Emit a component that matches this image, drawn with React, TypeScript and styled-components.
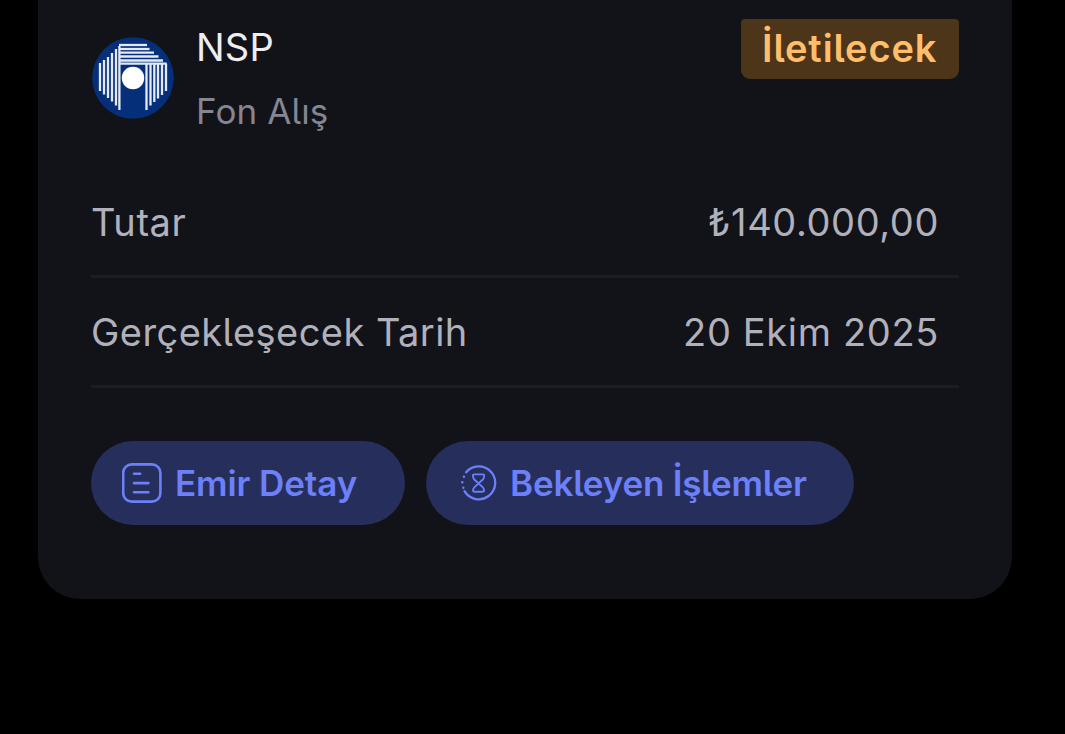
import React from 'react';
import styled, { createGlobalStyle } from 'styled-components';

const GlobalStyle = createGlobalStyle`
  body {
    margin: 0;
    background: #000;
    font-family: Inter, "Liberation Sans", sans-serif;
    font-feature-settings: "cv05" 1;
  }
`;

const Screen = styled.main`
  height: 734px;
  box-sizing: border-box;
  padding: 0 53px 0 38px;
  overflow: hidden;
`;

const Card = styled.article`
  box-sizing: border-box;
  height: 637px;
  margin-top: -38px;
  padding: 57px 53px 0;
  border-radius: 42px;
  background: #121318;
`;

const Header = styled.header`
  display: flex;
  align-items: flex-start;
  height: 149px;
`;

const LogoSlot = styled.div`
  width: 82px;
  height: 82px;
  margin: 18px 22px 0 1px;
  svg { display: block; }
`;

const Titles = styled.div`
  flex: 1;
  padding-top: 5px;
`;

const Title = styled.h1`
  margin: 0;
  font-size: 38px;
  font-weight: 400;
  line-height: 46px;
  letter-spacing: 0.2px;
  color: #ededf2;
`;

const Subtitle = styled.p`
  margin: 19px 0 0;
  font-size: 35px;
  font-weight: 400;
  line-height: 44px;
  letter-spacing: 0.1px;
  color: #858593;
`;

const Badge = styled.span`
  box-sizing: border-box;
  width: 218px;
  height: 60px;
  padding-left: 21px;
  border-radius: 4px 4px 9px 9px;
  background: #4c3519;
  color: #ffbe6b;
  font-size: 38px;
  font-weight: 600;
  line-height: 59px;
  letter-spacing: 0.9px;
  white-space: nowrap;
`;

const Row = styled.div`
  display: flex;
  justify-content: space-between;
  align-items: flex-start;
  box-sizing: border-box;
  height: 110px;
  padding: 31px 20px 0 0;
  border-bottom: 3px solid #1b1c26;
  font-size: 38px;
  line-height: 46px;
  color: #b1b1bb;
`;

const Text = styled.span<{ $spacing: number }>`
  letter-spacing: ${(p) => p.$spacing}px;
  white-space: nowrap;
`;

const Actions = styled.div`
  display: flex;
  gap: 21px;
  margin-top: 53px;
`;

const Button = styled.button<{ $width: number; $inset: number; $gap: number; $spacing: number }>`
  display: flex;
  align-items: center;
  gap: ${(p) => p.$gap}px;
  box-sizing: border-box;
  width: ${(p) => p.$width}px;
  height: 84px;
  padding: 0 0 0 ${(p) => p.$inset}px;
  border: 0;
  border-radius: 42px;
  background: #262e5c;
  color: #6c80fa;
  font: inherit;
  font-feature-settings: inherit;
  font-size: 35px;
  font-weight: 600;
  line-height: 44px;
  letter-spacing: ${(p) => p.$spacing}px;
  white-space: nowrap;
  svg { flex: none; }
`;

const leftBars = [
  [100, 63, 91], [104, 60, 94.5], [108, 57, 98], [112, 53, 101.5], [116, 49, 105.5], [119.4, 46, 110],
];
const rightBars = [
  [146.5, 64, 110], [150.5, 64, 105.5], [154.3, 64, 102], [158, 64, 98.5], [162, 64, 95], [166, 64, 91],
];
const topBars = [
  [45, 147], [49, 149.5], [52.7, 154], [56.5, 158.5], [60.5, 163], [63.7, 166.8],
];

const FundLogo = () => (
  <svg width="82" height="82" viewBox="92 37 82 82" fill="none">
    <circle cx="133" cy="78" r="40.8" fill="#053079" />
    <g stroke="#e4eaf5" strokeWidth="2.3">
      {leftBars.map(([x, a, b]) => <path key={x} d={`M${x} ${a}V${b}`} />)}
      {rightBars.map(([x, a, b]) => <path key={x} d={`M${x} ${a}V${b}`} />)}
      {topBars.map(([y, x]) => <path key={y} d={`M119 ${y}H${x}`} />)}
    </g>
    <circle cx="133" cy="78" r="11.2" fill="#fff" />
  </svg>
);

const DetailIcon = () => (
  <svg width="40" height="40" viewBox="0 0 40 40" fill="none" stroke="#6c80fa" strokeWidth="2.6" strokeLinecap="round">
    <rect x="1.2" y="1.4" width="37.2" height="37.2" rx="8.5" />
    <path d="M12 10.8H18.2M12 20.1H26.4M12 29.3H26.4" />
  </svg>
);

const PendingIcon = () => (
  <svg width="36" height="36" viewBox="0.5 0 36 36" fill="none" stroke="#6c80fa" strokeLinecap="round">
    <path d="M5.6 7.2A16.5 16.5 0 1 1 4 26.2" strokeWidth="2.3" />
    <g fill="#6c80fa" stroke="none">
      <circle cx="3.4" cy="11.7" r="1.2" />
      <circle cx="1.8" cy="17.3" r="1.2" />
      <circle cx="2.8" cy="22.8" r="1.2" />
    </g>
    <path
      d="M13.5 9.4H22.5Q23.7 9.4 23.7 10.6Q23.7 13.2 22.4 14.5L14 22.1Q12.5 23.5 12.5 25.6Q12.5 26.8 13.7 26.8H22.4Q23.6 26.8 23.6 25.6Q23.6 23.5 22.1 22.1L13.8 14.5Q12.4 13.2 12.4 10.6Q12.4 9.4 13.5 9.4Z"
      strokeWidth="1.9"
    />
  </svg>
);

export default function App() {
  return (
    <Screen>
      <GlobalStyle />
      <Card>
        <Header>
          <LogoSlot><FundLogo /></LogoSlot>
          <Titles>
            <Title>NSP</Title>
            <Subtitle>Fon Alış</Subtitle>
          </Titles>
          <Badge>İletilecek</Badge>
        </Header>
        <Row>
          <Text $spacing={0.6}>Tutar</Text>
          <Text $spacing={0.6}>₺140.000,00</Text>
        </Row>
        <Row>
          <Text $spacing={0.45}>Gerçekleşecek Tarih</Text>
          <Text $spacing={0.65}>20 Ekim 2025</Text>
        </Row>
        <Actions>
          <Button $width={314} $inset={31} $gap={13} $spacing={-0.1}><DetailIcon />Emir Detay</Button>
          <Button $width={428} $inset={35} $gap={13} $spacing={-0.18}><PendingIcon />Bekleyen İşlemler</Button>
        </Actions>
      </Card>
    </Screen>
  );
}
